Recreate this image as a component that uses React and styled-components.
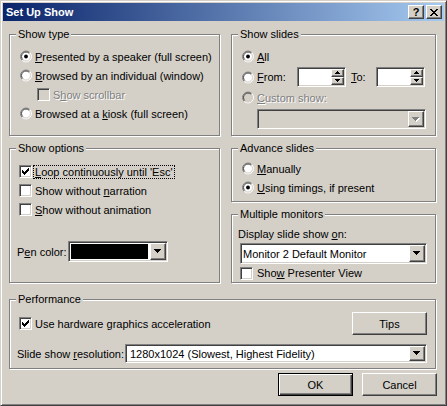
import React from "react";
import styled, { createGlobalStyle, css } from "styled-components";

const GlobalStyle = createGlobalStyle`
  html, body {
    margin: 0;
    padding: 0;
    background: #d4d0c8;
  }
  body {
    font-family: "Liberation Sans", Arial, sans-serif;
    font-size: 11px;
    color: #000;
  }
`;

const sunken = css`
  border: 1px solid;
  border-color: #808080 #fff #fff #808080;
  box-shadow: inset 1px 1px #404040, inset -1px -1px #d4d0c8;
`;

const raised = css`
  border: 1px solid;
  border-color: #fff #404040 #404040 #fff;
  box-shadow: inset -1px -1px #808080, inset 1px 1px #d4d0c8;
`;

const Window = styled.div`
  width: 447px;
  height: 406px;
  box-sizing: border-box;
  background: #d4d0c8;
  border: 1px solid;
  border-color: #d4d0c8 #404040 #404040 #d4d0c8;
  box-shadow: inset 1px 1px #fff, inset -1px -1px #808080;
  padding: 2px;
  display: flex;
  flex-direction: column;
`;

const TitleBar = styled.div`
  height: 18px;
  flex: none;
  display: flex;
  align-items: center;
  justify-content: space-between;
  padding: 0 2px 0 3px;
  background: linear-gradient(to right, #0a246a, #a6caf0);
`;

const Title = styled.span`
  color: #fff;
  font-weight: bold;
  font-size: 11px;
  white-space: nowrap;
`;

const CaptionButtons = styled.div`
  display: flex;
  gap: 2px;
`;

const CaptionButton = styled.div`
  ${raised}
  box-sizing: border-box;
  width: 16px;
  height: 14px;
  background: #d4d0c8;
  display: flex;
  align-items: center;
  justify-content: center;
`;

const HelpGlyph = styled.span`
  font-weight: bold;
  font-size: 11px;
  line-height: 11px;
  margin-top: 1px;
`;

const Body = styled.div`
  flex: 1;
  display: flex;
  flex-direction: column;
  padding: 13px 8px 7px 6px;
`;

const TwoCols = styled.div`
  display: grid;
  grid-template-columns: 211px 205px;
  column-gap: 11px;
  height: ${p => p.$h}px;
  margin-bottom: ${p => p.$mb || 0}px;
  flex: none;
`;

const Stack = styled.div`
  display: flex;
  flex-direction: column;
  gap: 12px;
`;

const Group = styled.div`
  position: relative;
  box-sizing: border-box;
  border: 1px solid #808080;
  box-shadow: 1px 1px 0 #fff, inset 1px 1px 0 #fff;
  height: ${p => p.$h}px;
  padding: ${p => p.$pad};
  margin-bottom: ${p => p.$mb || 0}px;
  display: flex;
  flex-direction: column;
  flex: none;
`;

const Legend = styled.span`
  position: absolute;
  top: -7px;
  left: 6px;
  padding: 0 2px;
  line-height: 13px;
  background: #d4d0c8;
  white-space: nowrap;
`;

const Row = styled.div`
  display: flex;
  align-items: center;
  gap: 3px;
  height: ${p => p.$h || 19}px;
  margin-left: ${p => p.$indent || 0}px;
  margin-top: ${p => p.$mt || 0}px;
  flex: none;
  white-space: nowrap;
`;

const Text = styled.span`
  color: ${p => (p.$disabled ? "#808080" : "#000")};
  text-shadow: ${p => (p.$disabled ? "1px 1px 0 #fff" : "none")};
  width: ${p => (p.$w ? `${p.$w}px` : "auto")};
  margin-left: ${p => p.$ml || 0}px;
  flex: none;
`;

const Focus = styled.span`
  outline: 1px dotted #000;
  outline-offset: 0;
  padding: 0 1px;
  margin-left: -1px;
`;

const CheckBox = styled.span`
  ${sunken}
  box-sizing: border-box;
  width: 13px;
  height: 13px;
  flex: none;
  display: block;
  background: ${p => (p.$disabled ? "#d4d0c8" : "#fff")};
`;

const CheckSvg = styled.svg`
  display: block;
`;

const checkCols = [2, 3, 4, 3, 2, 1, 0];

function Check({ checked, disabled }) {
  return (
    <CheckBox $disabled={disabled}>
      {checked && (
        <CheckSvg width="11" height="11" viewBox="0 0 11 11" shapeRendering="crispEdges">
          {checkCols.map((r, i) => (
            <rect key={i} x={2 + i} y={2 + r} width="1" height="3" fill="#000" />
          ))}
        </CheckSvg>
      )}
    </CheckBox>
  );
}

const RadioSvg = styled.svg`
  display: block;
  flex: none;
`;

function arc(cx, cy, r, firstHalf) {
  const d = r * 0.7071;
  const bl = `${cx - d} ${cy + d}`;
  const tr = `${cx + d} ${cy - d}`;
  return firstHalf
    ? `M${bl} A${r} ${r} 0 0 1 ${tr}`
    : `M${tr} A${r} ${r} 0 0 1 ${bl}`;
}

function Radio({ checked, disabled }) {
  const cx = 7;
  const cy = 6.5;
  return (
    <RadioSvg width="13" height="13" viewBox="0 0 13 13">
      <circle cx={cx} cy={cy} r="5" fill={disabled ? "#d4d0c8" : "#fff"} />
      <path d={arc(cx, cy, 5.5, true)} stroke="#808080" fill="none" />
      <path d={arc(cx, cy, 5.5, false)} stroke="#fff" fill="none" />
      <path d={arc(cx, cy, 4.5, true)} stroke="#404040" fill="none" />
      <path d={arc(cx, cy, 4.5, false)} stroke="#d4d0c8" fill="none" />
      {checked && <circle cx={cx} cy={cy} r="1.9" fill="#000" />}
    </RadioSvg>
  );
}

const Combo = styled.div`
  ${sunken}
  box-sizing: border-box;
  width: ${p => (p.$w ? `${p.$w}px` : "auto")};
  flex: ${p => (p.$w ? "none" : "1")};
  height: ${p => p.$h || 20}px;
  margin-left: ${p => p.$ml || 0}px;
  margin-top: ${p => p.$mt || 0}px;
  padding: 1px;
  background: ${p => (p.$disabled ? "#d4d0c8" : "#fff")};
  display: flex;
  align-items: stretch;
`;

const ComboValue = styled.span`
  flex: 1;
  display: flex;
  align-items: center;
  padding-left: ${p => p.$pl || 1}px;
  white-space: nowrap;
  overflow: hidden;
`;

const Swatch = styled.span`
  flex: 1;
  margin: 1px 2px 1px 1px;
  background: ${p => p.$color};
`;

const DropButton = styled.span`
  ${raised}
  box-sizing: border-box;
  width: 16px;
  flex: none;
  background: #d4d0c8;
  display: flex;
  align-items: center;
  justify-content: center;
`;

function Arrow({ down = true, disabled, w = 7 }) {
  const h = Math.ceil(w / 2);
  const rows = Array.from({ length: h }, (_, i) => i);
  const fill = disabled ? "#808080" : "#000";
  return (
    <svg width={w + 1} height={h + 1} viewBox={`0 0 ${w + 1} ${h + 1}`} shapeRendering="crispEdges" style={{ display: "block" }}>
      {rows.map(i => {
        const y = down ? i : h - 1 - i;
        return (
          <React.Fragment key={i}>
            {disabled && <rect x={i + 1} y={y + 1} width={w - 2 * i} height="1" fill="#fff" />}
            <rect x={i} y={y} width={w - 2 * i} height="1" fill={fill} />
          </React.Fragment>
        );
      })}
    </svg>
  );
}

function ComboBox({ value, color, w, h, ml, mt, pl, disabled }) {
  return (
    <Combo $w={w} $h={h} $ml={ml} $mt={mt} $disabled={disabled}>
      {color ? <Swatch $color={color} /> : <ComboValue $pl={pl}>{value}</ComboValue>}
      <DropButton>
        <Arrow disabled={disabled} />
      </DropButton>
    </Combo>
  );
}

const Spin = styled.div`
  ${sunken}
  box-sizing: border-box;
  width: 49px;
  height: 20px;
  padding: 1px;
  background: #fff;
  display: flex;
  justify-content: flex-end;
  flex: none;
`;

const SpinButtons = styled.div`
  width: 13px;
  display: flex;
  flex-direction: column;
`;

const SpinButton = styled.span`
  ${raised}
  box-sizing: border-box;
  flex: 1;
  background: #d4d0c8;
  display: flex;
  align-items: center;
  justify-content: center;
`;

function SpinBox() {
  return (
    <Spin>
      <SpinButtons>
        <SpinButton>
          <Arrow down={false} w={5} />
        </SpinButton>
        <SpinButton>
          <Arrow w={5} />
        </SpinButton>
      </SpinButtons>
    </Spin>
  );
}

const PushButton = styled.div`
  box-sizing: border-box;
  width: 75px;
  height: 23px;
  background: #d4d0c8;
  display: flex;
  align-items: center;
  justify-content: center;
  flex: none;
  ${p =>
    p.$default
      ? css`
          border: 1px solid #000;
          box-shadow: inset 1px 1px #fff, inset -1px -1px #404040, inset -2px -2px #808080;
        `
      : raised}
`;

const TopRow = styled.div`
  display: flex;
  align-items: center;
  justify-content: space-between;
  height: 23px;
  flex: none;
`;

const Buttons = styled.div`
  display: flex;
  justify-content: flex-end;
  gap: 9px;
  margin-top: 4px;
  margin-right: -1px;
  flex: none;
`;

function CloseGlyph() {
  const px = [
    [0, 0, 2], [6, 0, 2],
    [1, 1, 2], [5, 1, 2],
    [2, 2, 4],
    [3, 3, 2],
    [2, 4, 4],
    [1, 5, 2], [5, 5, 2],
    [0, 6, 2], [6, 6, 2]
  ];
  return (
    <svg width="8" height="7" viewBox="0 0 8 7" shapeRendering="crispEdges" style={{ display: "block" }}>
      {px.map(([x, y, w], i) => (
        <rect key={i} x={x} y={y} width={w} height="1" fill="#000" />
      ))}
    </svg>
  );
}

export default function App() {
  return (
    <>
      <GlobalStyle />
      <Window>
        <TitleBar>
          <Title>Set Up Show</Title>
          <CaptionButtons>
            <CaptionButton>
              <HelpGlyph>?</HelpGlyph>
            </CaptionButton>
            <CaptionButton>
              <CloseGlyph />
            </CaptionButton>
          </CaptionButtons>
        </TitleBar>

        <Body>
          <TwoCols $h={102} $mb={12}>
            <Group $h={102} $pad="12px 0 0 9px">
              <Legend>Show type</Legend>
              <Row>
                <Radio checked />
                <Text><u>P</u>resented by a speaker (full screen)</Text>
              </Row>
              <Row>
                <Radio />
                <Text><u>B</u>rowsed by an individual (window)</Text>
              </Row>
              <Row $indent={18}>
                <Check disabled />
                <Text $disabled>S<u>h</u>ow scrollbar</Text>
              </Row>
              <Row>
                <Radio />
                <Text>Browsed at a <u>k</u>iosk (full screen)</Text>
              </Row>
            </Group>

            <Group $h={102} $pad="12px 0 0 9px">
              <Legend>Show slides</Legend>
              <Row>
                <Radio checked />
                <Text><u>A</u>ll</Text>
              </Row>
              <Row $h={22}>
                <Radio />
                <Text $w={37}><u>F</u>rom:</Text>
                <SpinBox />
                <Text $w={22} $ml={2}><u>T</u>o:</Text>
                <SpinBox />
              </Row>
              <Row>
                <Radio disabled />
                <Text $disabled><u>C</u>ustom show:</Text>
              </Row>
              <ComboBox disabled w={169} ml={16} mt={2} />
            </Group>
          </TwoCols>

          <TwoCols $h={135} $mb={16}>
            <Group $h={135} $pad="13px 0 0 9px">
              <Legend>Show options</Legend>
              <Row>
                <Check checked />
                <Text><Focus><u>L</u>oop continuously until 'Esc'</Focus></Text>
              </Row>
              <Row>
                <Check />
                <Text>Show without <u>n</u>arration</Text>
              </Row>
              <Row>
                <Check />
                <Text><u>S</u>how without animation</Text>
              </Row>
              <Row $h={21} $mt={22} $indent={-2}>
                <Text $w={48}>P<u>e</u>n color:</Text>
                <ComboBox color="#000" w={100} h={21} />
              </Row>
            </Group>

            <Stack>
              <Group $h={54} $pad="10px 0 0 9px">
                <Legend>Advance slides</Legend>
                <Row>
                  <Radio />
                  <Text><u>M</u>anually</Text>
                </Row>
                <Row>
                  <Radio checked />
                  <Text><u>U</u>sing timings, if present</Text>
                </Row>
              </Group>

              <Group $h={69} $pad="11px 0 0 8px">
                <Legend>Multiple monitors</Legend>
                <Row $h={15} $indent={-2}>
                  <Text>Display slide show <u>o</u>n:</Text>
                </Row>
                <ComboBox value="Monitor 2 Default Monitor" w={187} h={21} mt={2} pl={1} />
                <Row $h={18}>
                  <Check />
                  <Text $ml={1}>Sho<u>w</u> Presenter View</Text>
                </Row>
              </Group>
            </Stack>
          </TwoCols>

          <Group $h={70} $pad="12px 8px 0 9px">
            <Legend>Performance</Legend>
            <TopRow>
              <Row>
                <Check checked />
                <Text>Use hardware <u>g</u>raphics acceleration</Text>
              </Row>
              <PushButton>Tips</PushButton>
            </TopRow>
            <Row $h={19} $mt={9} $indent={-2}>
              <Text $w={105}>Slide show <u>r</u>esolution:</Text>
              <ComboBox value="1280x1024 (Slowest, Highest Fidelity)" h={19} pl={3} />
            </Row>
          </Group>

          <Buttons>
            <PushButton $default>OK</PushButton>
            <PushButton>Cancel</PushButton>
          </Buttons>
        </Body>
      </Window>
    </>
  );
}
